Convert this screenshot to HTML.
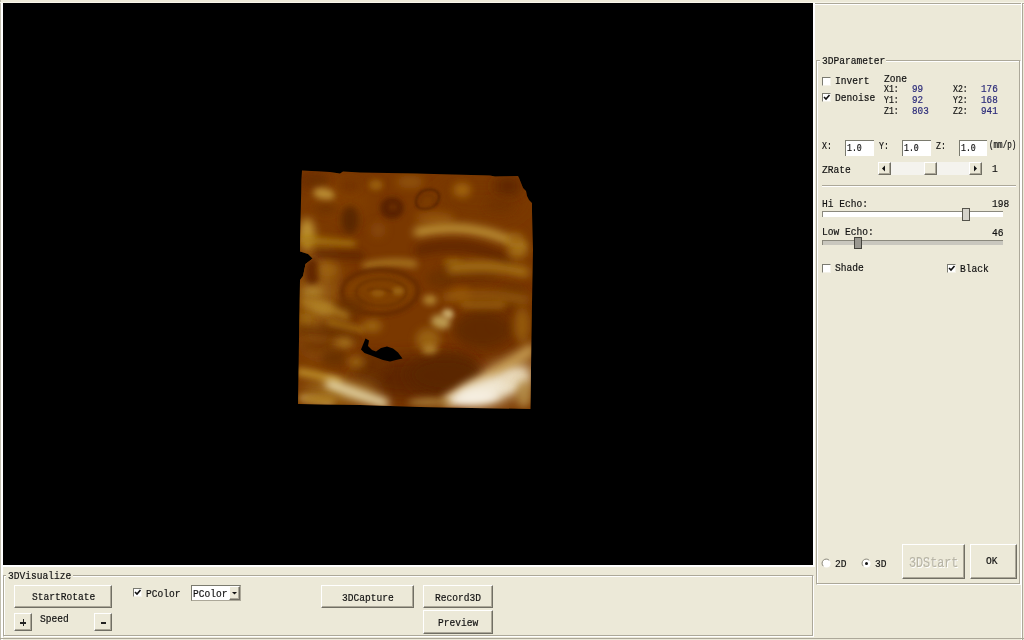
<!DOCTYPE html>
<html><head><meta charset="utf-8">
<style>
*{margin:0;padding:0;box-sizing:border-box}
html,body{width:1024px;height:640px;overflow:hidden;background:#ECE9D8;position:relative;font-family:"Liberation Mono",monospace}
.a{position:absolute}
.t{position:absolute;font-size:11.4px;line-height:9px;white-space:nowrap;color:#111;-webkit-text-stroke:0.2px currentColor;transform-origin:0 0;transform:scaleX(0.842)}
.s{font-size:10px;line-height:10px;transform:scaleX(0.82)}
.bl{color:#2b2b7a;transform:scaleX(0.93)}
.gb{position:absolute;border-top:1px solid #ACA899;border-left:1px solid #ACA899;border-right:1px solid #fff;border-bottom:1px solid #fff;box-shadow:inset -1px -1px 0 #ACA899, inset 1px 1px 0 #fff}
.btn{position:absolute;background:#ECE9D8;border-top:1px solid #fff;border-left:1px solid #fff;border-right:1px solid #716F64;border-bottom:1px solid #716F64;box-shadow:inset -1px -1px 0 #ACA899}
.cb{position:absolute;width:9px;height:9px;background:#fff;border-top:1px solid #7a7a70;border-left:1px solid #7a7a70;border-right:1px solid #f4f2e8;border-bottom:1px solid #f4f2e8}
.edit{position:absolute;background:#fff;border-top:1px solid #7a7a6e;border-left:1px solid #7a7a6e}
</style></head><body>
<!-- outer frame -->
<div class="a" style="left:0;top:0;width:1px;height:640px;background:#C2BFAF"></div>
<div class="a" style="left:1px;top:2px;width:2px;height:638px;background:#fff"></div>
<div class="a" style="left:0;top:2px;width:1024px;height:1px;background:#F8F6EA"></div>
<!-- black view -->
<div id="view" class="a" style="left:3px;top:3px;width:810px;height:562px;background:#000;overflow:hidden"></div>
<!--IMG-->
<svg class="a" style="left:0;top:0" width="1024" height="640" viewBox="0 0 1024 640">
<defs><clipPath id="clp"><polygon points="302,170.5 330,172 340,173.5 343,171.5 360,172.5 416,173.5 452,174.5 490,175.5 495,176.5 518,176 519,178 521,183 523,188 526,191 527,196 529,200 532,203 532,211 533,250 531.5,330 530.5,409 420,407 360,405 298,404 299,340 300,280 303,276 305.5,264 312.7,258.4 308,254 300,251.4 300.5,220 301.5,180"/></clipPath>
<filter id="b0_8" filterUnits="userSpaceOnUse" x="270" y="150" width="280" height="280"><feGaussianBlur stdDeviation="0.8"/></filter>
<filter id="b1" filterUnits="userSpaceOnUse" x="270" y="150" width="280" height="280"><feGaussianBlur stdDeviation="1"/></filter>
<filter id="b1_8" filterUnits="userSpaceOnUse" x="270" y="150" width="280" height="280"><feGaussianBlur stdDeviation="1.8"/></filter>
<filter id="b2" filterUnits="userSpaceOnUse" x="270" y="150" width="280" height="280"><feGaussianBlur stdDeviation="2"/></filter>
<filter id="b2_5" filterUnits="userSpaceOnUse" x="270" y="150" width="280" height="280"><feGaussianBlur stdDeviation="2.5"/></filter>
<filter id="b3" filterUnits="userSpaceOnUse" x="270" y="150" width="280" height="280"><feGaussianBlur stdDeviation="3"/></filter>
<filter id="b3_4" filterUnits="userSpaceOnUse" x="270" y="150" width="280" height="280"><feGaussianBlur stdDeviation="3.4"/></filter>
<filter id="b3_5" filterUnits="userSpaceOnUse" x="270" y="150" width="280" height="280"><feGaussianBlur stdDeviation="3.5"/></filter>
<filter id="b4" filterUnits="userSpaceOnUse" x="270" y="150" width="280" height="280"><feGaussianBlur stdDeviation="4"/></filter>
<filter id="b4_1" filterUnits="userSpaceOnUse" x="270" y="150" width="280" height="280"><feGaussianBlur stdDeviation="4.1"/></filter>
<filter id="b4_5" filterUnits="userSpaceOnUse" x="270" y="150" width="280" height="280"><feGaussianBlur stdDeviation="4.5"/></filter>
<filter id="b4_7" filterUnits="userSpaceOnUse" x="270" y="150" width="280" height="280"><feGaussianBlur stdDeviation="4.7"/></filter>
<filter id="b5" filterUnits="userSpaceOnUse" x="270" y="150" width="280" height="280"><feGaussianBlur stdDeviation="5"/></filter>
<filter id="b6" filterUnits="userSpaceOnUse" x="270" y="150" width="280" height="280"><feGaussianBlur stdDeviation="6"/></filter>
<filter id="b8" filterUnits="userSpaceOnUse" x="270" y="150" width="280" height="280"><feGaussianBlur stdDeviation="8"/></filter>
<filter id="b9" filterUnits="userSpaceOnUse" x="270" y="150" width="280" height="280"><feGaussianBlur stdDeviation="9"/></filter>
<filter id="b10" filterUnits="userSpaceOnUse" x="270" y="150" width="280" height="280"><feGaussianBlur stdDeviation="10"/></filter>
</defs><g clip-path="url(#clp)"><g><rect x="290" y="160" width="250" height="256" fill="#7A3800"/>
<ellipse cx="340" cy="200" rx="30" ry="20" fill="#844200" opacity="0.8" filter="url(#b10)"/>
<ellipse cx="312" cy="180" rx="14" ry="8" fill="#6A2E00" opacity="0.9" filter="url(#b5)"/>
<ellipse cx="480" cy="200" rx="45" ry="20" fill="#783800" opacity="1" filter="url(#b9)"/>
<ellipse cx="508" cy="186" rx="14" ry="10" fill="#5E2800" opacity="1" filter="url(#b6)"/>
<ellipse cx="318" cy="300" rx="20" ry="60" fill="#9A6014" opacity="0.9" filter="url(#b10)"/>
<ellipse cx="495" cy="325" rx="35" ry="35" fill="#703200" opacity="0.9" filter="url(#b10)"/>
<ellipse cx="415" cy="378" rx="62" ry="22" fill="#5E2800" opacity="1" filter="url(#b8)"/>
<ellipse cx="372" cy="365" rx="16" ry="14" fill="#682E00" opacity="0.9" filter="url(#b5)"/>
<ellipse cx="455" cy="368" rx="20" ry="16" fill="#602A00" opacity="0.9" filter="url(#b6)"/>
<ellipse cx="340" cy="392" rx="40" ry="12" fill="#A07020" opacity="0.9" filter="url(#b8)"/>
<ellipse cx="500" cy="384" rx="38" ry="16" fill="#D8C090" opacity="0.9" filter="url(#b9)" transform="rotate(-25 500 384)"/>
<ellipse cx="318" cy="181" rx="11" ry="4" fill="#6A3000" opacity="0.8" filter="url(#b3_4)" transform="rotate(-10 318 181)"/>
<ellipse cx="324" cy="194" rx="11" ry="6" fill="#B88A30" opacity="1" filter="url(#b3_4)" transform="rotate(12 324 194)"/>
<ellipse cx="326" cy="209" rx="12" ry="5" fill="#6C3000" opacity="0.9" filter="url(#b4_1)"/>
<ellipse cx="350" cy="220" rx="9" ry="14" fill="#5A2600" opacity="1" filter="url(#b3_5)"/>
<ellipse cx="350" cy="186" rx="10" ry="6" fill="#723200" opacity="0.9" filter="url(#b4)"/>
<ellipse cx="376" cy="185" rx="7" ry="5" fill="#A06810" opacity="0.9" filter="url(#b3_4)"/>
<ellipse cx="410" cy="182" rx="14" ry="6" fill="#945810" opacity="0.9" filter="url(#b4_7)"/>
<ellipse cx="392" cy="208" rx="12" ry="11" fill="#5A2400" opacity="1" filter="url(#b2_5)"/>
<ellipse cx="393" cy="207" rx="4" ry="3.5" fill="#6E3200" opacity="0.8" filter="url(#b2)"/>
<ellipse cx="427" cy="200" rx="11" ry="8" fill="#7A3A02" opacity="1" filter="url(#b2)" transform="rotate(-30 427 200)"/>
<path d="M417,206 C414,200 418,192 426,190 C434,188 440,192 439,198 C438,205 432,209 425,209 C421,209 418,208 417,206 Z" stroke="#5A2600" stroke-width="2.5" stroke-linecap="round" fill="none" opacity="0.9" filter="url(#b1)"/>
<path d="M421,203 C420,198 424,195 428,195 C433,195 435,198 433,202" stroke="#6A3000" stroke-width="1.5" stroke-linecap="round" fill="none" opacity="0.7" filter="url(#b0_8)"/>
<ellipse cx="462" cy="190" rx="9" ry="7" fill="#A86C10" opacity="0.9" filter="url(#b4_1)"/>
<ellipse cx="500" cy="205" rx="14" ry="7" fill="#6E3200" opacity="0.8" filter="url(#b4_1)"/>
<ellipse cx="435" cy="218" rx="20" ry="6" fill="#9A5C10" opacity="0.8" filter="url(#b4_5)"/>
<path d="M418,232 Q470,220 522,246" stroke="#C09438" stroke-width="9" stroke-linecap="round" fill="none" opacity="1" filter="url(#b4)"/>
<ellipse cx="516" cy="240" rx="8" ry="8" fill="#9C6410" opacity="0.8" filter="url(#b4_1)"/>
<path d="M420,250 Q470,238 508,262" stroke="#602800" stroke-width="11" stroke-linecap="round" fill="none" opacity="0.95" filter="url(#b4_5)"/>
<ellipse cx="378" cy="230" rx="8" ry="8" fill="#8A4C08" opacity="0.8" filter="url(#b4_1)"/>
<ellipse cx="307" cy="234" rx="8" ry="16" fill="#BC9030" opacity="1" filter="url(#b4)"/>
<path d="M304,240 L352,244" stroke="#A8780C" stroke-width="7" stroke-linecap="round" fill="none" opacity="0.9" filter="url(#b3_5)"/>
<path d="M318,254 L360,256" stroke="#602800" stroke-width="8" stroke-linecap="round" fill="none" opacity="0.95" filter="url(#b3_5)"/>
<path d="M366,266 Q390,260 414,264" stroke="#B08028" stroke-width="7" stroke-linecap="round" fill="none" opacity="0.9" filter="url(#b3_5)"/>
<ellipse cx="452" cy="262" rx="10" ry="3" fill="#A0700C" opacity="0.8" filter="url(#b3_4)"/>
<ellipse cx="312" cy="272" rx="8" ry="14" fill="#622800" opacity="1" filter="url(#b3)"/>
<ellipse cx="328" cy="270" rx="10" ry="6" fill="#A06810" opacity="0.8" filter="url(#b4_1)"/>
<ellipse cx="312" cy="292" rx="11" ry="5" fill="#B48A30" opacity="0.9" filter="url(#b4_1)"/>
<ellipse cx="322" cy="308" rx="14" ry="5" fill="#B48A30" opacity="0.9" filter="url(#b4_1)" transform="rotate(12 322 308)"/>
<ellipse cx="306" cy="320" rx="6" ry="8" fill="#A0700C" opacity="0.8" filter="url(#b4_1)"/>
<ellipse cx="380" cy="292" rx="38" ry="22" fill="#804004" opacity="1" filter="url(#b3)" transform="rotate(-4 380 292)"/>
<path d="M342,292 C342,278 360,270 380,270 C402,270 418,280 418,290 C418,304 400,314 380,314 C358,314 342,306 342,292 Z" stroke="#5E2800" stroke-width="4" stroke-linecap="round" fill="none" opacity="0.85" filter="url(#b2)"/>
<path d="M356,293 C356,284 368,279 382,279 C396,279 406,285 406,292 C406,300 396,306 382,306 C368,306 356,301 356,293 Z" stroke="#6A3000" stroke-width="3" stroke-linecap="round" fill="none" opacity="0.7" filter="url(#b1_8)"/>
<ellipse cx="398" cy="291" rx="6" ry="4" fill="#A06A14" opacity="0.8" filter="url(#b2)"/>
<ellipse cx="378" cy="293" rx="7" ry="4" fill="#9A6010" opacity="0.8" filter="url(#b2)"/>
<path d="M368,290 Q380,286 392,292" stroke="#6A3000" stroke-width="1.8" stroke-linecap="round" fill="none" opacity="0.7" filter="url(#b1)"/>
<ellipse cx="470" cy="274" rx="30" ry="10" fill="#6C3200" opacity="0.8" filter="url(#b4_7)"/>
<ellipse cx="441" cy="279" rx="15" ry="9" fill="#6A3000" opacity="0.8" filter="url(#b4_1)"/>
<ellipse cx="460" cy="294" rx="10" ry="8" fill="#8E4C02" opacity="0.9" filter="url(#b4_5)"/>
<path d="M452,268 Q488,263 524,272" stroke="#A87418" stroke-width="11" stroke-linecap="round" fill="none" opacity="0.9" filter="url(#b4)"/>
<ellipse cx="517" cy="252" rx="10" ry="7" fill="#A87418" opacity="0.8" filter="url(#b4_1)"/>
<ellipse cx="512" cy="296" rx="14" ry="12" fill="#6E3600" opacity="0.8" filter="url(#b4_1)"/>
<ellipse cx="350" cy="308" rx="16" ry="10" fill="#6A3000" opacity="0.9" filter="url(#b4_1)"/>
<ellipse cx="335" cy="328" rx="18" ry="6" fill="#6A3000" opacity="0.8" filter="url(#b4_1)"/>
<path d="M304,302 Q325,306 346,316" stroke="#B08020" stroke-width="7" stroke-linecap="round" fill="none" opacity="0.9" filter="url(#b3_5)"/>
<path d="M300,330 Q325,332 355,338" stroke="#6A3000" stroke-width="9" stroke-linecap="round" fill="none" opacity="0.9" filter="url(#b4)"/>
<path d="M330,322 L362,330" stroke="#A87418" stroke-width="6" stroke-linecap="round" fill="none" opacity="0.8" filter="url(#b3)"/>
<ellipse cx="372" cy="326" rx="10" ry="6" fill="#A87418" opacity="0.8" filter="url(#b4)"/>
<ellipse cx="318" cy="346" rx="18" ry="6" fill="#703404" opacity="0.9" filter="url(#b4_1)"/>
<ellipse cx="344" cy="343" rx="10" ry="5" fill="#B08024" opacity="0.9" filter="url(#b4_1)"/>
<path d="M300,372 Q320,375 338,382" stroke="#BC8C28" stroke-width="8" stroke-linecap="round" fill="none" opacity="1" filter="url(#b3_5)"/>
<ellipse cx="334" cy="358" rx="13" ry="8" fill="#683000" opacity="0.9" filter="url(#b4)"/>
<ellipse cx="356" cy="362" rx="9" ry="6" fill="#A47014" opacity="0.8" filter="url(#b4_1)"/>
<ellipse cx="430" cy="300" rx="7" ry="5" fill="#B88C34" opacity="0.9" filter="url(#b3)"/>
<ellipse cx="441" cy="322" rx="10" ry="7" fill="#BC9A50" opacity="1" filter="url(#b3)" transform="rotate(10 441 322)"/>
<path d="M447,297 Q485,292 525,300" stroke="#9A600E" stroke-width="9" stroke-linecap="round" fill="none" opacity="0.8" filter="url(#b4)"/>
<ellipse cx="448" cy="314" rx="6" ry="5" fill="#C8A868" opacity="1" filter="url(#b2_5)" transform="rotate(20 448 314)"/>
<ellipse cx="428" cy="340" rx="12" ry="12" fill="#A06C14" opacity="0.8" filter="url(#b4)"/>
<ellipse cx="430" cy="350" rx="7" ry="5" fill="#B88C34" opacity="0.9" filter="url(#b3)"/>
<ellipse cx="482" cy="330" rx="28" ry="18" fill="#602A00" opacity="0.9" filter="url(#b5)"/>
<path d="M464,305 L502,305" stroke="#A06A10" stroke-width="7" stroke-linecap="round" fill="none" opacity="0.8" filter="url(#b3_5)"/>
<ellipse cx="522" cy="325" rx="8" ry="18" fill="#9C6410" opacity="0.8" filter="url(#b4_5)"/>
<ellipse cx="445" cy="375" rx="38" ry="20" fill="#5A2600" opacity="0.9" filter="url(#b6)"/>
<path d="M450,400 Q490,380 530,350" stroke="#C49A50" stroke-width="12" stroke-linecap="round" fill="none" opacity="1" filter="url(#b5)"/>
<ellipse cx="490" cy="388" rx="36" ry="11" fill="#F0E6D0" opacity="1" filter="url(#b5)" transform="rotate(-15 490 388)"/>
<ellipse cx="472" cy="398" rx="28" ry="6" fill="#F8F2E6" opacity="1" filter="url(#b4_5)" transform="rotate(-5 472 398)"/>
<ellipse cx="515" cy="378" rx="14" ry="10" fill="#E8D8B8" opacity="0.9" filter="url(#b5)" transform="rotate(-20 515 378)"/>
<ellipse cx="430" cy="402" rx="22" ry="4" fill="#B08840" opacity="0.85" filter="url(#b3_5)"/>
<ellipse cx="524" cy="394" rx="8" ry="14" fill="#B48C46" opacity="0.9" filter="url(#b4)"/>
<path d="M330,384 Q356,394 384,403" stroke="#E4D4A4" stroke-width="10" stroke-linecap="round" fill="none" opacity="1" filter="url(#b4)"/>
<path d="M302,398 L330,402" stroke="#C8A460" stroke-width="6" stroke-linecap="round" fill="none" opacity="0.9" filter="url(#b3)"/>
<ellipse cx="320" cy="399" rx="20" ry="4" fill="#A87418" opacity="0.8" filter="url(#b3_5)"/>
</g></g><path d="M365.5,338.5 L369,340.5 L368,346 L372,350 L376,351.5 L381,348 L387,346.5 L393,348.5 L398,352.5 L402.5,358.5 L396,360 L390,361.5 L383,360 L376.5,357.5 L370,355 L364.5,353 L361,349.5 Z" fill="#000"/></svg>
<!--/IMG-->
<div class="a" style="left:813px;top:3px;width:2px;height:564px;background:#fff"></div>
<div class="a" style="left:3px;top:565px;width:812px;height:2px;background:#fff"></div>

<!-- right panel outer -->
<div class="a" style="left:815px;top:3px;width:209px;height:1px;background:#ACA899"></div>
<div class="a" style="left:815px;top:4px;width:209px;height:1px;background:#fff"></div>
<div class="a" style="left:1021px;top:3px;width:1px;height:637px;background:#fff"></div>
<div class="a" style="left:1022px;top:3px;width:1px;height:637px;background:#ACA899"></div>
<div class="a" style="left:0;top:638px;width:1024px;height:1px;background:#ACA899"></div>

<!-- 3DParameter group -->
<div class="gb" style="left:816px;top:60px;width:205px;height:525px"></div>
<div class="a" style="left:820px;top:55px;width:66px;height:10px;background:#ECE9D8"></div>
<div class="t" style="left:822px;top:57px">3DParameter</div>

<div class="cb" style="left:822px;top:77px"></div>
<div class="t" style="left:835px;top:77px">Invert</div>
<div class="cb" style="left:822px;top:93px"></div>
<svg class="a" style="left:822px;top:93px" width="9" height="9"><path d="M2 4 L4 6 L7.5 2" stroke="#111" stroke-width="1.6" fill="none"/></svg>
<div class="t" style="left:835px;top:94px">Denoise</div>

<div class="t" style="left:884px;top:75px">Zone</div>
<div class="t s" style="left:884px;top:85px">X1:</div>
<div class="t s" style="left:884px;top:96px">Y1:</div>
<div class="t s" style="left:884px;top:107px">Z1:</div>
<div class="t s bl" style="left:912px;top:85px">99</div>
<div class="t s bl" style="left:912px;top:96px">92</div>
<div class="t s bl" style="left:912px;top:107px">803</div>
<div class="t s" style="left:953px;top:85px">X2:</div>
<div class="t s" style="left:953px;top:96px">Y2:</div>
<div class="t s" style="left:953px;top:107px">Z2:</div>
<div class="t s bl" style="left:981px;top:85px">176</div>
<div class="t s bl" style="left:981px;top:96px">168</div>
<div class="t s bl" style="left:981px;top:107px">941</div>

<div class="t s" style="left:822px;top:142px">X:</div>
<div class="edit" style="left:845px;top:140px;width:29px;height:16px"></div>
<div class="t s" style="left:847px;top:144px">1.0</div>
<div class="t s" style="left:879px;top:142px">Y:</div>
<div class="edit" style="left:902px;top:140px;width:29px;height:16px"></div>
<div class="t s" style="left:904px;top:144px">1.0</div>
<div class="t s" style="left:936px;top:142px">Z:</div>
<div class="edit" style="left:959px;top:140px;width:28px;height:16px"></div>
<div class="t s" style="left:961px;top:144px">1.0</div>
<div class="t s" style="left:989px;top:141px;transform:scaleX(0.76)">(mm/p)</div>

<div class="t" style="left:822px;top:166px">ZRate</div>
<!-- scrollbar -->
<div class="a" style="left:878px;top:162px;width:104px;height:13px;background:#F4F3EE"></div>
<div class="btn" style="left:878px;top:162px;width:13px;height:13px"></div>
<svg class="a" style="left:878px;top:162px" width="13" height="13"><path d="M4 6.5 L7 3.5 L7 9.5 Z" fill="#111"/></svg>
<div class="btn" style="left:924px;top:162px;width:13px;height:13px"></div>
<div class="btn" style="left:969px;top:162px;width:13px;height:13px"></div>
<svg class="a" style="left:969px;top:162px" width="13" height="13"><path d="M8 6.5 L5 3.5 L5 9.5 Z" fill="#111"/></svg>
<div class="t" style="left:992px;top:165px">1</div>

<div class="a" style="left:822px;top:185px;width:194px;height:1px;background:#ACA899"></div>
<div class="a" style="left:822px;top:186px;width:194px;height:1px;background:#fff"></div>

<div class="t" style="left:822px;top:200px">Hi Echo:</div>
<div class="t" style="left:992px;top:200px">198</div>
<div class="a" style="left:822px;top:211px;width:181px;height:6px;background:#fff;border-top:1px solid #8a887c;border-left:1px solid #8a887c"></div>
<div class="a" style="left:962px;top:208px;width:8px;height:13px;background:#D4D2CA;border:1px solid #55544c"></div>
<div class="t" style="left:822px;top:228px">Low Echo:</div>
<div class="t" style="left:992px;top:229px">46</div>
<div class="a" style="left:822px;top:240px;width:181px;height:5px;background:#C9C7BE;border-top:1px solid #8a887c;border-left:1px solid #8a887c"></div>
<div class="a" style="left:854px;top:237px;width:8px;height:12px;background:#9a9890;border:1px solid #44433c"></div>

<div class="cb" style="left:822px;top:264px"></div>
<div class="t" style="left:835px;top:264px">Shade</div>
<div class="cb" style="left:947px;top:264px"></div>
<svg class="a" style="left:947px;top:264px" width="9" height="9"><path d="M2 4 L4 6 L7.5 2" stroke="#111" stroke-width="1.6" fill="none"/></svg>
<div class="t" style="left:960px;top:265px">Black</div>

<!-- radios -->
<svg class="a" style="left:821px;top:558px" width="12" height="12"><circle cx="5.5" cy="5.5" r="4" fill="#fff"/><path d="M2.3,8.2 A4,4 0 0 1 8.2,2.3" stroke="#8a887c" stroke-width="1" fill="none"/></svg>
<div class="t" style="left:835px;top:560px">2D</div>
<svg class="a" style="left:861px;top:558px" width="12" height="12"><circle cx="5.5" cy="5.5" r="4" fill="#fff"/><path d="M2.3,8.2 A4,4 0 0 1 8.2,2.3" stroke="#8a887c" stroke-width="1" fill="none"/><circle cx="5.5" cy="5.5" r="1.5" fill="#111"/></svg>
<div class="t" style="left:875px;top:560px">3D</div>

<div class="btn" style="left:902px;top:544px;width:63px;height:35px"></div>
<div class="t" style="left:909px;top:556px;font-size:14px;line-height:14px;transform:scaleX(0.84);color:#B8B5A6;text-shadow:1px 1px 0 #fff">3DStart</div>
<div class="btn" style="left:970px;top:544px;width:47px;height:35px"></div>
<div class="t" style="left:986px;top:557px">OK</div>

<!-- 3DVisualize group -->
<div class="gb" style="left:3px;top:575px;width:811px;height:62px"></div>
<div class="a" style="left:6px;top:570px;width:67px;height:10px;background:#ECE9D8"></div>
<div class="t" style="left:8px;top:572px">3DVisualize</div>

<div class="btn" style="left:14px;top:585px;width:98px;height:23px"></div>
<div class="t" style="left:32px;top:593px">StartRotate</div>
<div class="btn" style="left:14px;top:613px;width:18px;height:18px"></div>
<div class="a" style="left:20px;top:622px;width:6px;height:1.5px;background:#222"></div><div class="a" style="left:22.5px;top:619px;width:1.5px;height:7px;background:#222"></div>
<div class="t" style="left:40px;top:615px">Speed</div>
<div class="btn" style="left:94px;top:613px;width:18px;height:18px"></div>
<div class="a" style="left:101px;top:622px;width:5px;height:1.5px;background:#222"></div>

<div class="cb" style="left:133px;top:588px"></div>
<svg class="a" style="left:133px;top:588px" width="9" height="9"><path d="M2 4 L4 6 L7.5 2" stroke="#111" stroke-width="1.6" fill="none"/></svg>
<div class="t" style="left:146px;top:590px">PColor</div>
<div class="a" style="left:191px;top:585px;width:50px;height:16px;background:#fff;border-top:1px solid #7a7a6e;border-left:1px solid #7a7a6e;border-right:1px solid #ACA899;border-bottom:1px solid #ACA899"></div>
<div class="t" style="left:193px;top:590px">PColor</div>
<div class="btn" style="left:229px;top:586px;width:11px;height:14px"></div>
<svg class="a" style="left:229px;top:586px" width="11" height="14"><path d="M3 6 L8 6 L5.5 8.5 Z" fill="#111"/></svg>

<div class="btn" style="left:321px;top:585px;width:93px;height:23px"></div>
<div class="t" style="left:342px;top:594px">3DCapture</div>
<div class="btn" style="left:423px;top:585px;width:70px;height:23px"></div>
<div class="t" style="left:435px;top:594px">Record3D</div>
<div class="btn" style="left:423px;top:610px;width:70px;height:24px"></div>
<div class="t" style="left:438px;top:619px">Preview</div>

</body></html>
